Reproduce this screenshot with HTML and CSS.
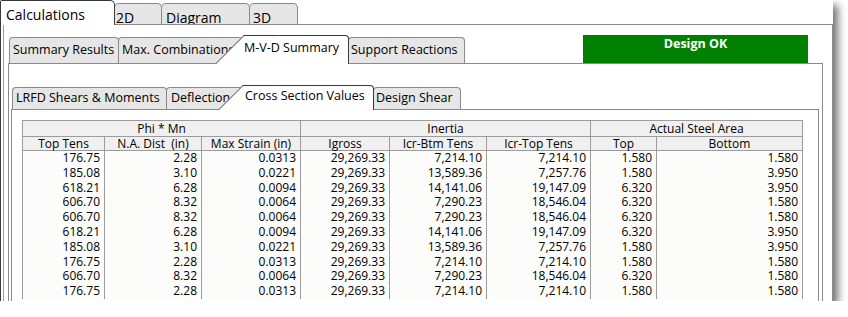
FILE: index.html
```html
<!DOCTYPE html>
<html lang="en">
<head>
  <meta charset="UTF-8">
  <meta name="viewport" content="width=device-width, initial-scale=1.0">
  <title>Calculations - Cross Section Values</title>
  <link rel="stylesheet" href="styles.css">
</head>
<body>
  <div class="window">
    <div class="main-strip">
      <div class="tab active tab-calc">Calculations</div>
      <div class="tab tab-2d">2D</div>
      <div class="tab tab-diagram">Diagram</div>
      <div class="tab tab-3d">3D</div>
    </div>

    <div class="main-page">
      <div class="main-body">
        <div class="sub-head">
          <div class="tab-strip">
            <div class="tab tab-summary">Summary Results</div>
            <div class="tab tab-max">Max. Combinations</div>
            <div class="tab active slant tab-mvd">M-V-D Summary</div>
            <div class="tab tab-support">Support Reactions</div>
          </div>
          <div class="status">Design OK</div>
        </div>

        <div class="sub-page">
          <div class="inner-head">
            <div class="tab-strip">
              <div class="tab tab-lrfd">LRFD Shears &amp; Moments</div>
              <div class="tab tab-deflection">Deflection</div>
              <div class="tab active slant tab-cross">Cross Section Values</div>
              <div class="tab tab-shear">Design Shear</div>
            </div>
          </div>

          <div class="inner-page">
            <div class="grid" id="grid">
              <div class="h group span-3">Phi * Mn</div>
              <div class="h group span-3">Inertia</div>
              <div class="h group span-2">Actual Steel Area</div>

              <div class="h col">Top Tens</div>
              <div class="h col">N.A. Dist&nbsp; (in)</div>
              <div class="h col">Max Strain (in)</div>
              <div class="h col">Igross</div>
              <div class="h col">Icr-Btm Tens</div>
              <div class="h col">Icr-Top Tens</div>
              <div class="h col">Top</div>
              <div class="h col">Bottom</div>
            </div>
          </div>
        </div>
      </div>
    </div>
  </div>

  <script>
    const rows = [
      ['176.75', '2.28', '0.0313', '29,269.33', '7,214.10', '7,214.10', '1.580', '1.580'],
      ['185.08', '3.10', '0.0221', '29,269.33', '13,589.36', '7,257.76', '1.580', '3.950'],
      ['618.21', '6.28', '0.0094', '29,269.33', '14,141.06', '19,147.09', '6.320', '3.950'],
      ['606.70', '8.32', '0.0064', '29,269.33', '7,290.23', '18,546.04', '6.320', '1.580'],
      ['606.70', '8.32', '0.0064', '29,269.33', '7,290.23', '18,546.04', '6.320', '1.580'],
      ['618.21', '6.28', '0.0094', '29,269.33', '14,141.06', '19,147.09', '6.320', '3.950'],
      ['185.08', '3.10', '0.0221', '29,269.33', '13,589.36', '7,257.76', '1.580', '3.950'],
      ['176.75', '2.28', '0.0313', '29,269.33', '7,214.10', '7,214.10', '1.580', '1.580'],
      ['606.70', '8.32', '0.0064', '29,269.33', '7,290.23', '18,546.04', '6.320', '1.580'],
      ['176.75', '2.28', '0.0313', '29,269.33', '7,214.10', '7,214.10', '1.580', '1.580']
    ];

    const grid = document.getElementById('grid');

    // Fill the body of the grid, one cell per value
    rows.forEach(row => {
      row.forEach(value => {
        const cell = document.createElement('div');
        cell.classList.add('c');
        cell.textContent = value;
        grid.appendChild(cell);
      });
    });
  </script>
</body>
</html>
```

FILE: styles.css
```css
* {
  box-sizing: border-box;
}

body {
  margin: 0;
  background-color: #fff;
  font-family: "Open Sans", "Noto Sans", sans-serif;
  color: #000;
}

.window {
  width: 833px;
  height: 301px;
  display: flex;
  flex-direction: column;
  background-color: #fff;
  box-shadow: 5px 5px 8px rgba(0, 0, 0, 0.55);
  overflow: hidden;
}

/* Tabs, shared by all three levels */
.tab {
  border: 1px solid #8a8a8a;
  border-bottom: none;
  border-radius: 4px 4px 0 0;
  background-color: #e6e6e6;
  margin-left: -1px;
  white-space: nowrap;
  overflow: hidden;
}

.tab.active {
  position: relative;
  z-index: 2;
  background-color: #fff;
  border-color: #3a3a3a;
  overflow: visible;
}

/* Active tabs with the slanted left edge */
.tab.slant {
  border-left: none;
  border-radius: 0 4px 0 0;
}

.tab.slant::before {
  content: "";
  position: absolute;
  z-index: -1;
  top: -1px;
  bottom: 0;
  width: 34px;
  background-color: #fff;
  border-top: 1px solid #3a3a3a;
  border-left: 1px solid #3a3a3a;
  transform: skewX(-45deg);
  transform-origin: bottom left;
}

/* Top level */
.main-strip {
  display: flex;
  align-items: flex-end;
  height: 24px;
  flex: none;
  font-size: 14px;
  line-height: 19px;
}

.main-strip .tab {
  height: 21px;
  padding-top: 4px;
  border-radius: 5px 5px 0 0;
}

.main-strip .tab.active {
  height: 25px;
  margin-left: 0;
  margin-bottom: -1px;
  border-radius: 2px 5px 0 0;
}

.tab-calc {
  width: 115px;
  padding-left: 5px;
}

.tab-2d {
  width: 48px;
  padding-left: 1px;
}

.tab-diagram {
  width: 89px;
  padding-left: 4px;
}

.tab-3d {
  width: 49px;
  padding-left: 3px;
}

.main-page {
  flex: 1;
  display: flex;
  border: 1px solid #8a8a8a;
  border-left-color: #3a3a3a;
  border-bottom: none;
  min-height: 0;
}

.main-body {
  flex: 1;
  display: flex;
  flex-direction: column;
  margin-left: 2px;
  border-left: 1px solid #9a9a9a;
  padding: 0 9px 0 4px;
  min-width: 0;
}

/* Second level */
.tab-strip {
  display: flex;
  align-items: flex-end;
  font-size: 12.5px;
  line-height: 18px;
}

.tab-strip .tab:first-child {
  margin-left: 0;
}

.sub-head {
  display: flex;
  align-items: flex-end;
  height: 38px;
  flex: none;
  padding-left: 1px;
}

.sub-head .tab {
  height: 26px;
  padding: 3px 0 0 3px;
}

.sub-head .tab.active {
  height: 29px;
  margin-bottom: -1px;
}

.tab-summary {
  width: 110px;
}

.tab-max {
  width: 125px;
}

.sub-head .tab-mvd {
  width: 105px;
  margin-left: 1px;
  padding-left: 0;
}

.tab-mvd::before {
  left: -29px;
}

.sub-head .tab-support {
  width: 117px;
  padding-left: 2px;
}

.status {
  margin-left: auto;
  margin-right: 15px;
  width: 225px;
  height: 28px;
  background-color: #008000;
  color: #fff;
  font-size: 12.5px;
  font-weight: bold;
  line-height: 18px;
  text-align: center;
}

.sub-page {
  flex: 1;
  display: flex;
  flex-direction: column;
  border: 1px solid #8a8a8a;
  border-bottom: none;
  padding: 0 3px 0 2px;
  min-height: 0;
}

/* Third level */
.inner-head {
  display: flex;
  align-items: flex-end;
  height: 45px;
  flex: none;
  padding-left: 1px;
}

.inner-head .tab {
  height: 22px;
  padding: 1px 0 0 3px;
}

.inner-head .tab.active {
  height: 25px;
  margin-bottom: -1px;
}

.tab-lrfd {
  width: 155px;
}

.inner-head .tab-deflection {
  width: 77px;
  padding-left: 4px;
}

.inner-head .tab-cross {
  width: 131px;
  margin-left: 0;
  padding-left: 2px;
}

.tab-cross::before {
  left: -25px;
}

.inner-head .tab-shear {
  width: 88px;
  padding-left: 2px;
}

.inner-page {
  flex: 1;
  border: 1px solid #8a8a8a;
  border-bottom: none;
  padding: 10px 0 0 10px;
  min-height: 0;
}

/* Result grid */
.grid {
  display: grid;
  grid-template-columns: 82px 97px 99px 89px 97px 104px 66px 146px;
  grid-template-rows: 16px 14px;
  grid-auto-rows: 14.8px;
  width: 781px;
  border-left: 1px solid #9c9c9c;
  border-top: 1px solid #9c9c9c;
  font-size: 12px;
}

.grid .h {
  background-color: #f0f0f0;
  border-right: 1px solid #9c9c9c;
  border-bottom: 1px solid #9c9c9c;
  text-align: center;
  white-space: nowrap;
}

.grid .group {
  line-height: 15px;
}

.grid .span-3 {
  grid-column: span 3;
}

.grid .span-2 {
  grid-column: span 2;
}

.grid .col {
  line-height: 13px;
}

.grid .c {
  background-color: #fcfcfa;
  border-right: 1px solid #9c9c9c;
  padding-right: 4px;
  text-align: right;
  line-height: 14.8px;
}
```
